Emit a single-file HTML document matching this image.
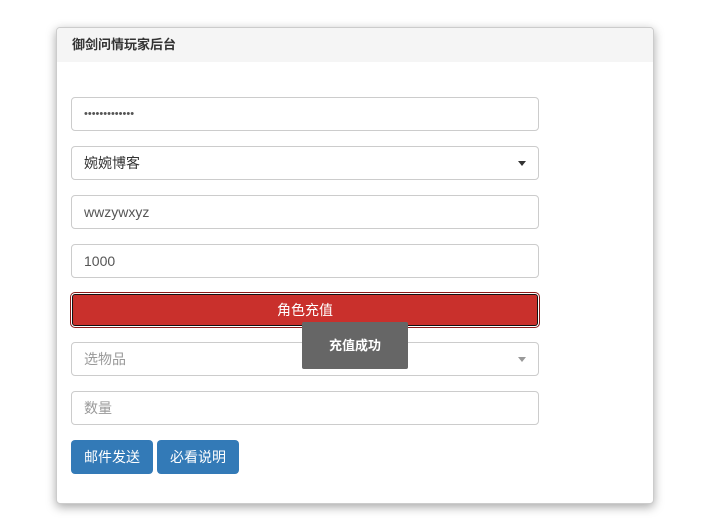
<!DOCTYPE html>
<html><head><meta charset="utf-8"><style>
body{margin:0;background:#fff;font-family:"Liberation Sans","Noto Sans CJK SC",sans-serif;font-size:14px;color:#333;}
.panel{position:absolute;left:56px;top:27px;width:596px;height:475px;border:1px solid #ccc;border-radius:4px;box-shadow:0 3px 10px rgba(0,0,0,.35);background:#fff;overflow:hidden}
.hd{height:34px;background:#f5f5f5;line-height:34px;padding-left:15px;font-weight:bold;font-size:13px;color:#333}
.f{position:absolute;left:14px;height:32px;border:1px solid #ccc;border-radius:4px;line-height:32px;padding-left:12px;box-sizing:content-box;width:454px}
.ph{color:#999}
.caret{position:absolute;right:12px;top:14px;border-left:4px solid transparent;border-right:4px solid transparent;border-top:5px solid #333}
.red{position:absolute;left:14px;top:265px;width:464px;height:30px;background:#c9302c;border:1px solid #111;box-shadow:0 0 0 1px #fff,0 0 0 2px #8b1a1a;border-radius:3px;color:#fff;text-align:center;line-height:30px;margin:1px}
.btn{position:absolute;top:412px;height:34px;width:82px;background:#337ab7;border-radius:4px;color:#fff;text-align:center;line-height:34px}
.toast{position:absolute;left:302px;top:322px;width:106px;height:47px;background:#666;border-radius:2px;color:#fff;text-align:center;line-height:47px;font-size:13px;font-weight:bold}
</style></head><body>
<div class="panel">
<div class="hd">御剑问情玩家后台</div>
<div class="f" style="top:69px;font-size:11px;letter-spacing:0px;color:#555">•••••••••••••</div>
<div class="f" style="top:118px">婉婉博客<span class="caret"></span></div>
<div class="f" style="top:167px;color:#555">wwzywxyz</div>
<div class="f" style="top:216px;color:#555">1000</div>
<div class="red">角色充值</div>
<div class="f ph" style="top:314px">选物品<span class="caret" style="border-top-color:#999"></span></div>
<div class="f ph" style="top:363px">数量</div>
<div class="btn" style="left:14px">邮件发送</div>
<div class="btn" style="left:100px">必看说明</div>
</div>
<div class="toast">充值成功</div>
</body></html>
